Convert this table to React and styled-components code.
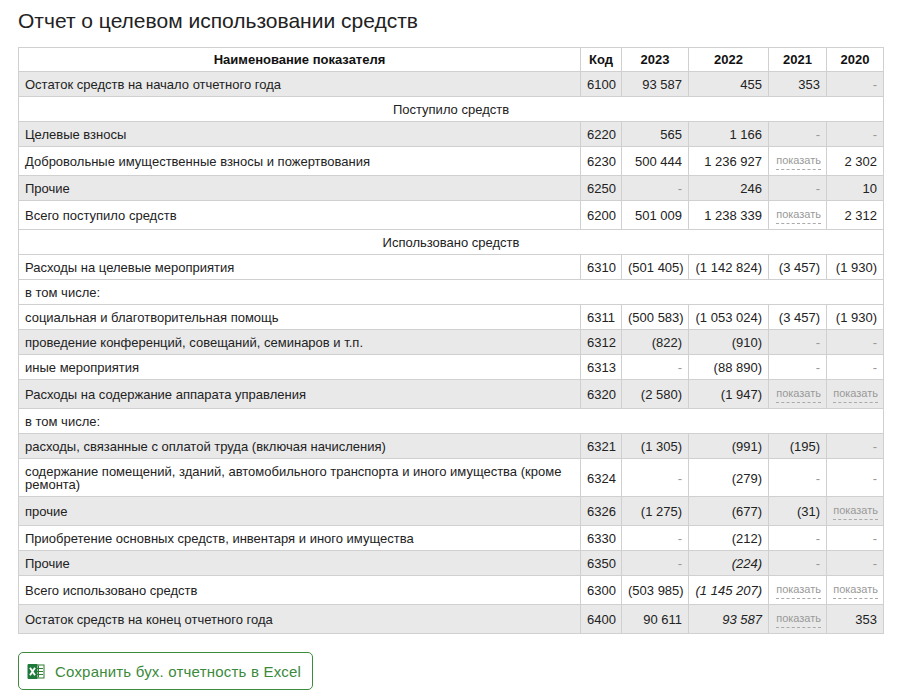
import React from "react";
import styled, { createGlobalStyle } from "styled-components";

const Global = createGlobalStyle`
  body {
    margin: 8px;
    background: #fff;
    font-family: "Liberation Sans", Arial, sans-serif;
    color: #222;
  }
`;

const Page = styled.div`
  padding: 0 10px;
`;

const Title = styled.h1`
  margin: 1px 0 14px;
  font-size: 21px;
  line-height: 24px;
  font-weight: normal;
  color: #222;
`;

const Table = styled.table`
  width: 866px;
  table-layout: fixed;
  border-collapse: collapse;
  font-size: 13px;
  line-height: 13px;
`;

const Row = styled.tr`
  background: ${(p) => (p.$gray ? "#e9e9e9" : "#fff")};
`;

const Th = styled.th`
  border: 1px solid #d0d0d0;
  padding: 5px 4px 5px;
  font-weight: bold;
  text-align: center;
  color: #111;
`;

const Td = styled.td`
  border: 1px solid #d0d0d0;
  padding: 6px 6px 5px;
  text-align: ${(p) => p.$align || "left"};
  vertical-align: middle;
  font-style: ${(p) => (p.$italic ? "italic" : "normal")};
  color: ${(p) => (p.$muted ? "#999" : "#222")};
  white-space: ${(p) => (p.$nowrap ? "nowrap" : "normal")};
`;

const ShowCell = styled(Td)`
  padding-left: 2px;
  padding-right: 5px;
`;

const Show = styled.span`
  display: inline-block;
  font-size: 11px;
  line-height: 15px;
  color: #999;
  border-bottom: 1px dashed #aaa;
  padding-bottom: 1px;
`;

const ExcelButton = styled.a`
  display: flex;
  width: fit-content;
  box-sizing: border-box;
  align-items: center;
  gap: 10px;
  margin-top: 18px;
  height: 38px;
  padding: 0 11px 0 8px;
  border: 1px solid #3d8b3d;
  border-radius: 5px;
  color: #3b8a3b;
  font-size: 15px;
  letter-spacing: 0.2px;
  text-decoration: none;
  cursor: pointer;
`;

const ExcelIcon = () => (
  <svg width="18" height="17" viewBox="0 0 18 17">
    <rect x="7" y="2" width="10" height="13" fill="#fff" stroke="#2e7d32" strokeWidth="1" />
    <path d="M8 5.5h8M8 8.5h8M8 11.5h8M11.5 2.5v12" stroke="#2e7d32" strokeWidth="1" />
    <rect x="0.5" y="1" width="10" height="15" rx="1" fill="#1e7a3a" />
    <path d="M3 4.8l5 7.4M8 4.8l-5 7.4" stroke="#fff" strokeWidth="1.9" />
  </svg>
);

const D = { t: "-" };
const S = { show: true };

const rows = [
  { name: "Остаток средств на начало отчетного года", code: "6100", v: ["93 587", "455", "353", D], gray: true },
  { section: "Поступило средств" },
  { name: "Целевые взносы", code: "6220", v: ["565", "1 166", D, D], gray: true },
  { name: "Добровольные имущественные взносы и пожертвования", code: "6230", v: ["500 444", "1 236 927", S, "2 302"] },
  { name: "Прочие", code: "6250", v: [D, "246", D, "10"], gray: true },
  { name: "Всего поступило средств", code: "6200", v: ["501 009", "1 238 339", S, "2 312"] },
  { section: "Использовано средств" },
  { name: "Расходы на целевые мероприятия", code: "6310", v: ["(501 405)", "(1 142 824)", "(3 457)", "(1 930)"] },
  { note: "в том числе:" },
  { name: "социальная и благотворительная помощь", code: "6311", v: ["(500 583)", "(1 053 024)", "(3 457)", "(1 930)"] },
  { name: "проведение конференций, совещаний, семинаров и т.п.", code: "6312", v: ["(822)", "(910)", D, D], gray: true },
  { name: "иные мероприятия", code: "6313", v: [D, "(88 890)", D, D] },
  { name: "Расходы на содержание аппарата управления", code: "6320", v: ["(2 580)", "(1 947)", S, S], gray: true },
  { note: "в том числе:" },
  { name: "расходы, связанные с оплатой труда (включая начисления)", code: "6321", v: ["(1 305)", "(991)", "(195)", D], gray: true },
  { name: "содержание помещений, зданий, автомобильного транспорта и иного имущества (кроме ремонта)", code: "6324", v: [D, "(279)", D, D] },
  { name: "прочие", code: "6326", v: ["(1 275)", "(677)", "(31)", S], gray: true },
  { name: "Приобретение основных средств, инвентаря и иного имущества", code: "6330", v: [D, "(212)", D, D] },
  { name: "Прочие", code: "6350", v: [D, { t: "(224)", i: true }, D, D], gray: true },
  { name: "Всего использовано средств", code: "6300", v: ["(503 985)", { t: "(1 145 207)", i: true }, S, S] },
  { name: "Остаток средств на конец отчетного года", code: "6400", v: ["90 611", { t: "93 587", i: true }, S, "353"], gray: true },
];

const ValueCell = ({ v }) => {
  if (typeof v === "string") return <Td $align="right" $nowrap>{v}</Td>;
  if (v.show)
    return (
      <ShowCell $align="right" $nowrap>
        <Show>показать</Show>
      </ShowCell>
    );
  if (v.t === "-") return <Td $align="right" $muted>-</Td>;
  return (
    <Td $align="right" $nowrap $italic={v.i}>
      {v.t}
    </Td>
  );
};

export default function App() {
  return (
    <Page>
      <Global />
      <Title>Отчет о целевом использовании средств</Title>
      <Table>
        <colgroup>
          <col />
          <col style={{ width: "41px" }} />
          <col style={{ width: "67px" }} />
          <col style={{ width: "80px" }} />
          <col style={{ width: "58px" }} />
          <col style={{ width: "57px" }} />
        </colgroup>
        <thead>
          <tr>
            <Th>Наименование показателя</Th>
            <Th>Код</Th>
            <Th>2023</Th>
            <Th>2022</Th>
            <Th>2021</Th>
            <Th>2020</Th>
          </tr>
        </thead>
        <tbody>
          {rows.map((r, i) => {
            if (r.section)
              return (
                <Row key={i}>
                  <Td colSpan={6} $align="center">{r.section}</Td>
                </Row>
              );
            if (r.note)
              return (
                <Row key={i}>
                  <Td colSpan={6}>{r.note}</Td>
                </Row>
              );
            return (
              <Row key={i} $gray={r.gray}>
                <Td>{r.name}</Td>
                <Td>{r.code}</Td>
                {r.v.map((v, j) => (
                  <ValueCell key={j} v={v} />
                ))}
              </Row>
            );
          })}
        </tbody>
      </Table>
      <ExcelButton>
        <ExcelIcon />
        Сохранить бух. отчетность в Excel
      </ExcelButton>
    </Page>
  );
}
